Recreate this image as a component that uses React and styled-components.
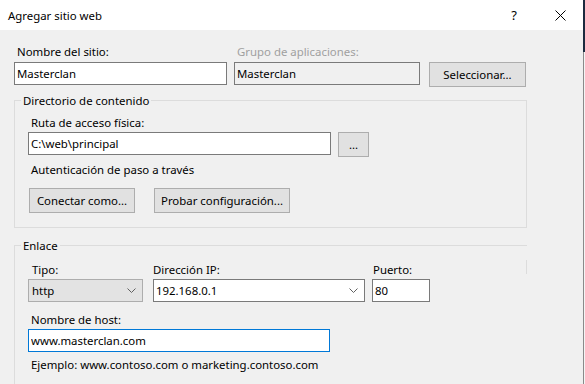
import React from 'react';
import styled, { createGlobalStyle } from 'styled-components';

const GlobalStyle = createGlobalStyle`
  html, body { margin: 0; padding: 0; background: #f0f0f0; }
  body {
    font-family: "Noto Sans", "Segoe UI", "Liberation Sans", sans-serif;
    font-size: 11.4px;
    color: #000;
  }
  #root { width: 585px; height: 384px; overflow: hidden; }
`;

const Screen = styled.div`
  display: flex;
  width: 585px;
  height: 384px;
  overflow: hidden;
`;

const Dialog = styled.div`
  width: 583px;
  display: flex;
  flex-direction: column;
  background: #f0f0f0;
`;

const Edge = styled.div`
  width: 2px;
  display: flex;
  flex-direction: column;
`;

const EdgeTop = styled.div`
  height: 52px;
  background: #1c2b3f;
`;

const EdgeRest = styled.div`
  flex: 1;
  box-sizing: border-box;
  border-left: 1px solid #8a8a8a;
  background: #f4f4f4;
`;

const TitleBar = styled.div`
  height: 30px;
  background: #fff;
  display: flex;
  align-items: center;
  padding-left: 8px;
`;

const Title = styled.div`
  flex: 1;
  line-height: 15px;
`;

const CaptionButton = styled.div`
  width: 46px;
  height: 30px;
  display: flex;
  align-items: center;
  justify-content: center;
  font-size: 13px;
  color: #000;
`;

const Body = styled.div`
  flex: 1;
  padding: 14px 0 0 14px;
  display: flex;
  flex-direction: column;
`;

const Grid = styled.div`
  display: grid;
  grid-template-columns: ${p => p.$cols};
  row-gap: ${p => p.$rowGap ?? 3}px;
  align-items: start;
`;

const Label = styled.div`
  line-height: 15px;
  padding-left: ${p => p.$indent ?? 3}px;
  color: ${p => (p.$muted ? '#a0a0a0' : '#000')};
  white-space: nowrap;
  margin-top: ${p => p.$top ?? 0}px;
`;

const TextBox = styled.input`
  box-sizing: border-box;
  width: ${p => p.$w}px;
  height: 23px;
  margin: ${p => p.$top ?? 0}px 0 0 0;
  padding: 0 0 0 ${p => p.$pad ?? 2}px;
  border: 1px solid ${p => (p.$focus ? '#0078d7' : '#7a7a7a')};
  border-radius: 0;
  background: ${p => (p.$disabled ? '#f0f0f0' : '#fff')};
  font: inherit;
  color: #000;
  outline: none;
  line-height: 15px;
`;

const Combo = styled.div`
  box-sizing: border-box;
  width: ${p => p.$w}px;
  height: 23px;
  display: flex;
  align-items: center;
  padding: 0 6px 0 ${p => p.$pad ?? 2}px;
  border: 1px solid ${p => (p.$flat ? '#adadad' : '#7a7a7a')};
  background: ${p => (p.$flat ? '#e3e3e3' : '#fff')};
  line-height: 15px;
`;

const ComboText = styled.span`
  flex: 1;
  white-space: nowrap;
`;

const Button = styled.button`
  box-sizing: border-box;
  width: ${p => p.$w}px;
  height: 25px;
  margin: 0 0 0 ${p => p.$left ?? 0}px;
  padding: 0;
  border: 1px solid #adadad;
  border-radius: 0;
  background: #e1e1e1;
  font: inherit;
  color: #000;
  line-height: 15px;
`;

const Group = styled.fieldset`
  box-sizing: border-box;
  width: 513px;
  margin: ${p => p.$top}px 0 0 0;
  padding: ${p => p.$padTop}px 0 ${p => p.$padBottom}px 13px;
  border: 1px solid #dcdcdc;
  border-right: ${p => (p.$openRight ? 'none' : '1px solid #dcdcdc')};
  position: relative;
  min-width: 0;
  ${p =>
    p.$openRight &&
    `&::after {
      content: '';
      position: absolute;
      right: 0;
      top: 7px;
      width: 1px;
      height: 14px;
      background: #dcdcdc;
    }`}
`;

const Legend = styled.legend`
  padding: 0 2px;
  margin-left: -7px;
  line-height: 15px;
`;

const Row = styled.div`
  display: flex;
  align-items: flex-start;
  gap: ${p => p.$gap ?? 0}px;
  margin-top: ${p => p.$top ?? 0}px;
`;

const Note = styled.div`
  line-height: 15px;
  padding-left: 3px;
  margin-top: ${p => p.$top ?? 0}px;
`;

const Chevron = () => (
  <svg width="9" height="5" viewBox="0 0 9 5">
    <path d="M0.5 0.5 L4.5 4.5 L8.5 0.5" fill="none" stroke="#606060" strokeWidth="1" />
  </svg>
);

const CloseIcon = () => (
  <svg width="11" height="11" viewBox="0 0 11 11">
    <path d="M0.5 0.5 L10.5 10.5 M10.5 0.5 L0.5 10.5" fill="none" stroke="#000" strokeWidth="1" />
  </svg>
);

export default function App() {
  return (
    <>
      <GlobalStyle />
      <Screen>
        <Dialog>
          <TitleBar>
            <Title>Agregar sitio web</Title>
            <CaptionButton>?</CaptionButton>
            <CaptionButton>
              <CloseIcon />
            </CaptionButton>
          </TitleBar>
          <Body>
            <Grid $cols="220px 195px 97px">
              <Label>Nombre del sitio:</Label>
              <Label $muted>Grupo de aplicaciones:</Label>
              <div />
              <TextBox $w={213} readOnly value="Masterclan" />
              <TextBox $w={186} $disabled readOnly value="Masterclan" />
              <Button $w={97}>Seleccionar...</Button>
            </Grid>

            <Group $top={6} $padTop={7} $padBottom={14}>
              <Legend>Directorio de contenido</Legend>
              <Label>Ruta de acceso física:</Label>
              <Row $gap={7} $top={2}>
                <TextBox $w={303} readOnly value="C:\web\principal" />
                <Button $w={31}>...</Button>
              </Row>
              <Note $top={5}>Autenticación de paso a través</Note>
              <Row $gap={19} $top={11}>
                <Button $w={106} $left={1}>Conectar como...</Button>
                <Button $w={136}>Probar configuración...</Button>
              </Row>
            </Group>

            <Group $top={10} $padTop={9} $padBottom={40} $openRight>
              <Legend>Enlace</Legend>
              <Grid $cols="125px 219px 58px" $rowGap={2}>
                <Label $indent={4}>Tipo:</Label>
                <Label $indent={0}>Dirección IP:</Label>
                <Label $indent={1}>Puerto:</Label>
                <Combo $w={115} $flat $pad={3}>
                  <ComboText>http</ComboText>
                  <Chevron />
                </Combo>
                <Combo $w={212} $pad={2}>
                  <ComboText>192.168.0.1</ComboText>
                  <Chevron />
                </Combo>
                <TextBox $w={58} $pad={2} readOnly value="80" />
              </Grid>
              <Label $top={10}>Nombre de host:</Label>
              <TextBox $w={302} $top={2} $focus $pad={2} readOnly value="www.masterclan.com" />
              <Note $top={5}>Ejemplo: www.contoso.com o marketing.contoso.com</Note>
            </Group>
          </Body>
        </Dialog>
        <Edge>
          <EdgeTop />
          <EdgeRest />
        </Edge>
      </Screen>
    </>
  );
}
